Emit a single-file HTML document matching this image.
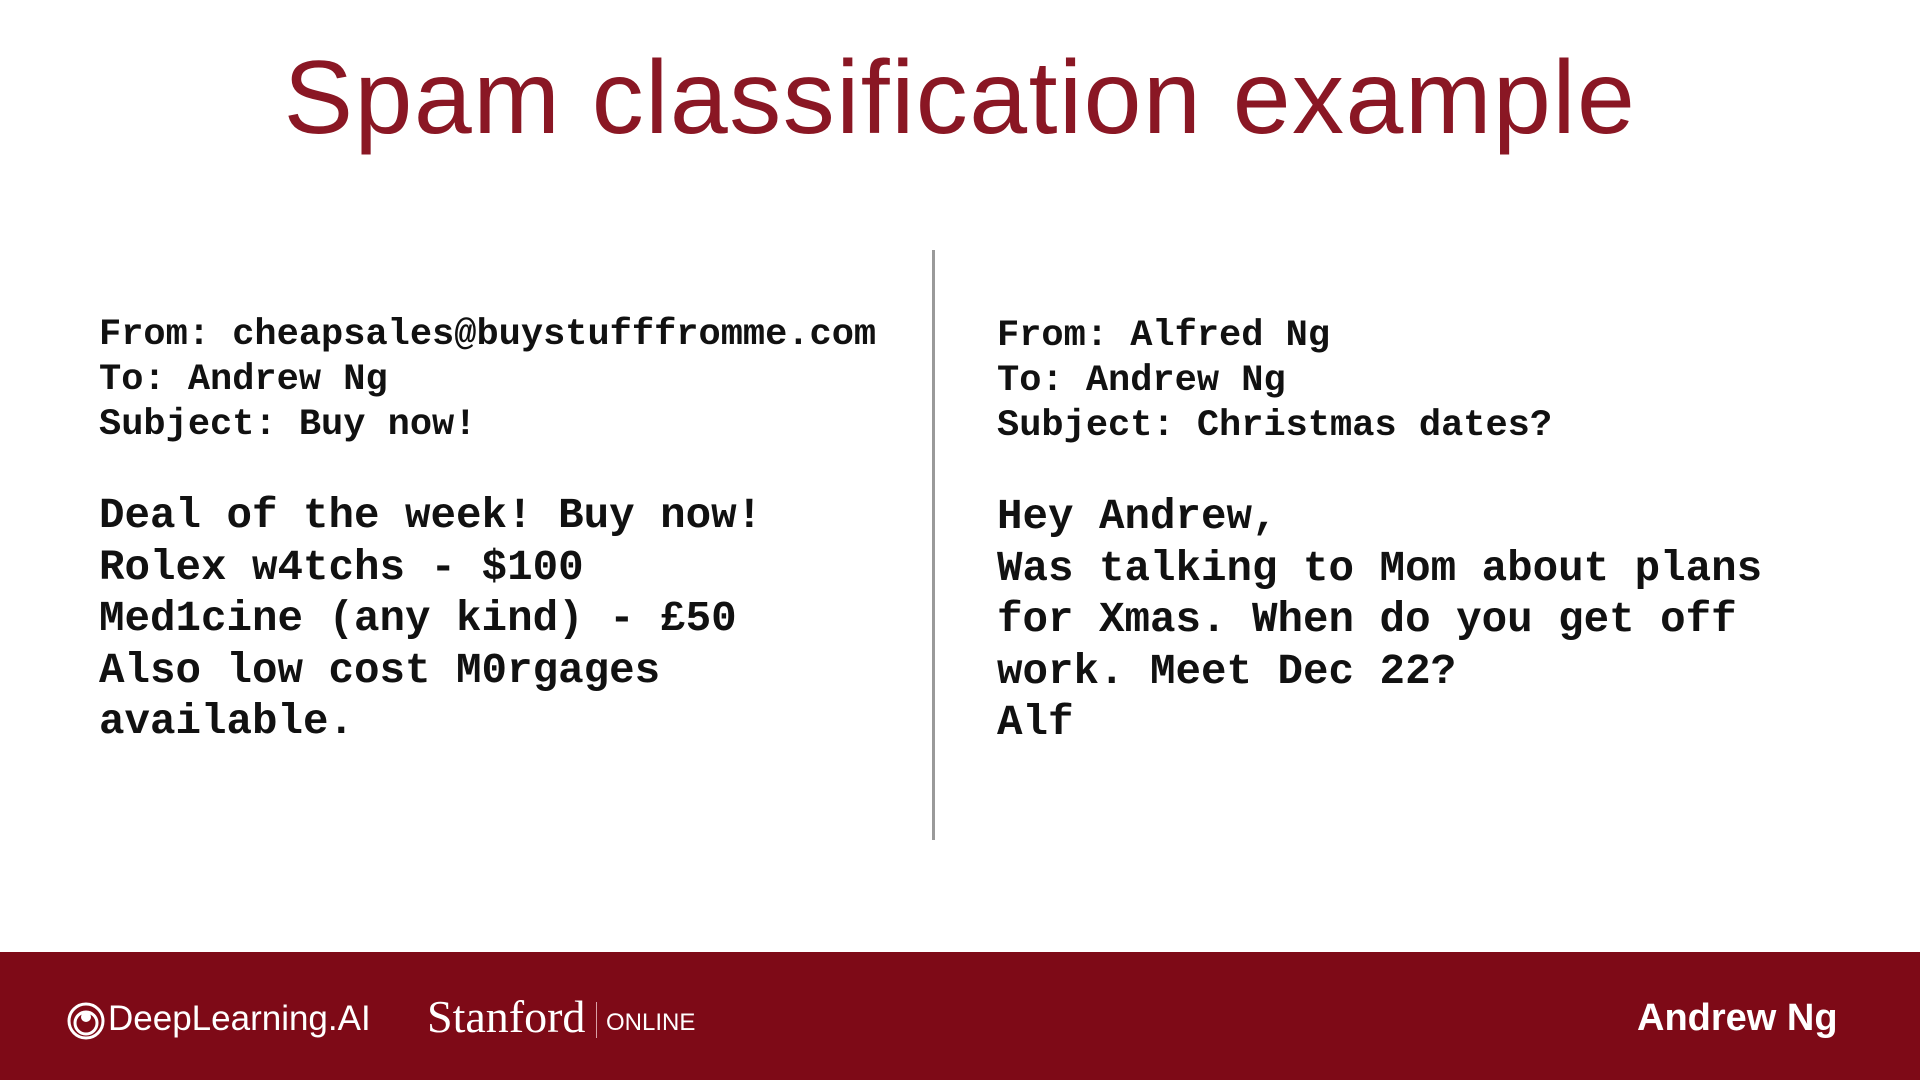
<!DOCTYPE html>
<html><head><meta charset="utf-8"><style>
body{margin:0;width:1920px;height:1080px;background:#fff;position:relative;overflow:hidden;font-family:"Liberation Sans",sans-serif}
.t{position:absolute;left:0;width:1920px;text-align:center;top:38px;font-size:104px;letter-spacing:1.5px;color:#8a1724;line-height:120px}
.m{position:absolute;font-family:"Liberation Mono",monospace;font-weight:bold;color:#111;white-space:pre}
.h{font-size:37px;line-height:45px}
.b{font-size:42.5px;line-height:51.5px}
.div{position:absolute;left:932px;top:250px;width:3px;height:590px;background:#9a9a9a}
.f{position:absolute;left:0;top:952px;width:1920px;height:128px;background:#7e0a17}
.w{position:absolute;color:#fff}
</style></head><body>
<div class="t">Spam classification example</div>
<div class="m h" style="left:99px;top:313px">From: cheapsales@buystufffromme.com
To: Andrew Ng
Subject: Buy now!</div>
<div class="m b" style="left:99px;top:491px">Deal of the week! Buy now!
Rolex w4tchs - $100
Med1cine (any kind) - £50
Also low cost M0rgages
available.</div>
<div class="div"></div>
<div class="m h" style="left:997px;top:314px">From: Alfred Ng
To: Andrew Ng
Subject: Christmas dates?</div>
<div class="m b" style="left:997px;top:492px">Hey Andrew,
Was talking to Mom about plans
for Xmas. When do you get off
work. Meet Dec 22?
Alf</div>
<div class="f">
<svg style="position:absolute;left:67px;top:50px" width="38" height="38" viewBox="0 0 38 38"><circle cx="19" cy="19" r="17" fill="none" stroke="#fff" stroke-width="3"/><circle cx="19" cy="21" r="11" fill="none" stroke="#fff" stroke-width="3"/><circle cx="19" cy="15" r="5" fill="#fff"/></svg>
<div class="w" style="left:108px;top:47px;font-size:35px">DeepLearning.AI</div>
<div class="w" style="left:427px;top:38px;font-size:46px;font-family:'Liberation Serif',serif">Stanford</div>
<div style="position:absolute;left:596px;top:50px;width:1px;height:36px;background:#d9a0a6"></div>
<div class="w" style="left:606px;top:57px;font-size:24px">ONLINE</div>
<div class="w" style="left:1637px;top:45px;font-size:38px;font-weight:bold">Andrew Ng</div>
</div>
</body></html>
